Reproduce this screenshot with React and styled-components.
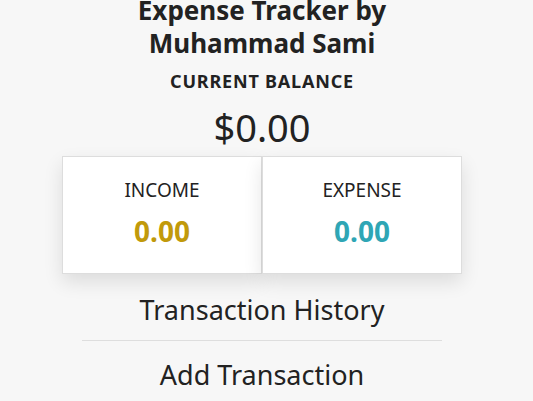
import React from "react";
import styled, { createGlobalStyle } from "styled-components";

const Global = createGlobalStyle`
  html, body { margin: 0; padding: 0; background: #f7f7f7; }
  body {
    font-family: "Noto Sans", "Open Sans", sans-serif;
    color: #222;
    padding-right: 9px;
  }
`;

const Container = styled.div`
  width: 400px;
  margin: 0 auto;
  display: flex;
  flex-direction: column;
  align-items: center;
`;

const Title = styled.h2`
  margin: -6px 0 0;
  font-size: 26px;
  font-weight: 700;
  line-height: 33px;
  text-align: center;
`;

const BalanceLabel = styled.h4`
  margin: 9px 0 0;
  font-size: 18px;
  font-weight: 700;
  line-height: 24px;
  letter-spacing: 0.8px;
  text-transform: uppercase;
`;

const Balance = styled.h1`
  margin: 11px 0 0;
  font-size: 38px;
  font-weight: 400;
  line-height: 46px;
`;

const Cards = styled.div`
  margin-top: 6px;
  width: 100%;
  display: grid;
  grid-template-columns: 1fr 1fr;
`;

const Card = styled.div`
  background: #fff;
  border: 1px solid #dddddd;
  box-shadow: 0 8px 18px rgba(0, 0, 0, 0.11);
  height: 118px;
  display: flex;
  flex-direction: column;
  align-items: center;
  padding-top: 21px;
  box-sizing: border-box;
`;

const CardLabel = styled.div`
  font-size: 19px;
  line-height: 24px;
  text-transform: uppercase;
`;

const Amount = styled.div`
  margin-top: 12px;
  font-size: 28px;
  font-weight: 700;
  line-height: 34px;
  color: ${(p) => p.$color};
`;

const Section = styled.h3`
  margin: ${(p) => p.$top}px 0 0;
  font-size: 27px;
  font-weight: 400;
  line-height: 36px;
  text-align: center;
`;

const Divider = styled.hr`
  width: 360px;
  margin: 12px 0 0;
  border: none;
  border-top: 1px solid #dedede;
`;

export default function App() {
  return (
    <>
      <Global />
      <Container>
        <Title>
          Expense Tracker by
          <br />
          Muhammad Sami
        </Title>
        <BalanceLabel>Current Balance</BalanceLabel>
        <Balance>$0.00</Balance>
        <Cards>
          <Card>
            <CardLabel>Income</CardLabel>
            <Amount $color="#c19a0b">0.00</Amount>
          </Card>
          <Card>
            <CardLabel>Expense</CardLabel>
            <Amount $color="#2fa6b5">0.00</Amount>
          </Card>
        </Cards>
        <Section $top={18}>Transaction History</Section>
        <Divider />
        <Section $top={16}>Add Transaction</Section>
      </Container>
    </>
  );
}
